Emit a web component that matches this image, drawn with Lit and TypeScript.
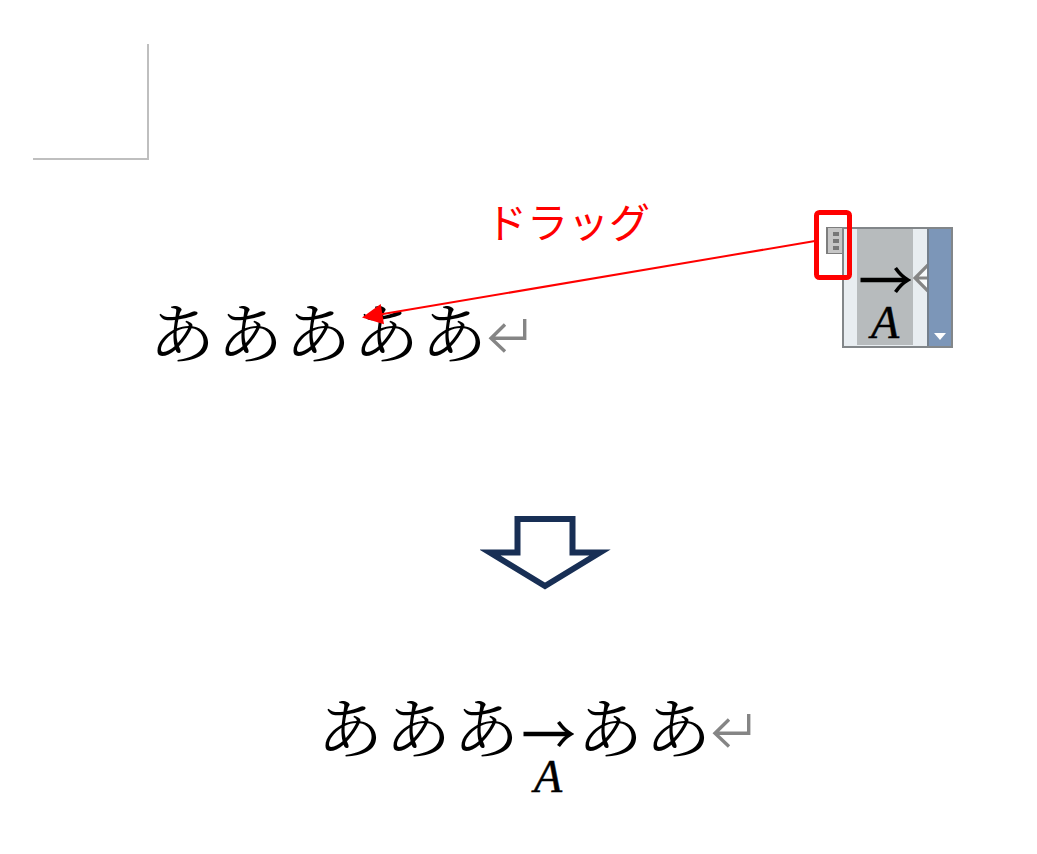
import { LitElement, html, css } from "lit";
import { customElement, property } from "lit/decorators.js";

@customElement("kana-run")
class KanaRun extends LitElement {
  @property() text = "";
  static styles = css`
    :host {
      display: flex;
      font-family: "Noto Serif CJK JP", "Noto Sans CJK JP", serif;
      font-size: 66px;
      font-weight: 400;
      line-height: 68px;
      color: #000;
    }
    .cell {
      width: 68px;
      text-align: center;
    }
  `;
  render() {
    return [...this.text].map((c) => html`<span class="cell">${c}</span>`);
  }
}

@customElement("return-mark")
class ReturnMark extends LitElement {
  static styles = css`
    :host,
    svg {
      display: block;
    }
  `;
  render() {
    return html`<svg width="40" height="36" viewBox="0 0 40 36" fill="none" stroke="#858585" stroke-width="3.4" aria-hidden="true">
      <path d="M36.7 1V20.3H3M17 6.500 3 20.300l14 13.200" />
    </svg>`;
  }
}

@customElement("arrow-equation")
class ArrowEquation extends LitElement {
  static styles = css`
    :host {
      display: flex;
      flex-direction: column;
      align-items: center;
      width: 56px;
      font-family: "Liberation Serif", serif;
      font-size: 46px;
      font-style: italic;
      line-height: 46px;
      color: #000;
      -webkit-text-stroke: 0.5px #000;
    }
    svg {
      display: block;
      margin-bottom: 6px;
    }
  `;
  render() {
    return html`<svg width="52" height="28" viewBox="0 0 52 28" fill="none" stroke="#000" aria-hidden="true">
        <path d="M1.500 14H48" stroke-width="4.600" />
        <path d="M36.500 2 Q42 10 49 14 Q42 18 36.500 26" stroke-width="3.600" />
      </svg>
      <span>A</span>`;
  }
}

@customElement("equation-control")
class EquationControl extends LitElement {
  static styles = css`
    :host {
      display: flex;
      align-items: flex-start;
      height: 121px;
    }
    button {
      padding: 0;
      margin: 0;
      border: 0;
      border-radius: 0;
      display: block;
    }
    svg {
      display: block;
    }
    .grip {
      box-sizing: border-box;
      width: 16px;
      height: 27px;
      border: 1px solid #7d7d7d;
      border-width: 1px 0 1px 2px;
      background: #c6c6c6;
    }
    .frame {
      box-sizing: border-box;
      display: flex;
      width: 111px;
      height: 121px;
      border: 2px solid #828689;
      background: #e8edf1;
    }
    .selection {
      box-sizing: border-box;
      width: 56px;
      height: 116px;
      margin-left: 13px;
      padding-top: 37px;
      background: #b7bbbd;
    }
    .options {
      width: 24px;
      background: #7c96b8;
      border-left: 2px solid #747f8c;
      box-sizing: border-box;
    }
    .options svg {
      margin: 96px auto 0;
    }
  `;
  render() {
    return html`<button class="grip" aria-label="移動">
        <svg width="14" height="25" viewBox="0 0 14 25" fill="#777" aria-hidden="true">
          <path d="M5 4h6v4H5zM5 11h6v4H5zM5 18h6v4H5z" />
        </svg>
      </button>
      <div class="frame">
        <div class="selection"><arrow-equation></arrow-equation></div>
        <svg width="14" height="117" viewBox="0 0 14 117" aria-hidden="true">
          <path d="M14 36 0 49 14 62Z" fill="#f8fafb" />
          <path d="M15 36 2 49 15 62M2 49H14" fill="none" stroke="#858585" stroke-width="3.200" />
        </svg>
        <button class="options" aria-label="数式オプション">
          <svg width="12" height="8" viewBox="0 0 12 8" fill="#fff" aria-hidden="true"><path d="M0 1h12L6 8z" /></svg>
        </button>
      </div>`;
  }
}

@customElement("app-root")
class AppRoot extends LitElement {
  static styles = css`
    :host {
      display: block;
      background: #fff;
    }
    main {
      position: relative;
      padding: 44px 0 60px;
    }
    .corner {
      box-sizing: border-box;
      width: 116px;
      height: 116px;
      margin-left: 33px;
      border: solid #bfbfbf;
      border-width: 0 2px 2px 0;
    }
    .before {
      display: flex;
      justify-content: space-between;
      align-items: flex-start;
      padding: 34px 84px 0 148px;
    }
    .drag {
      margin: 0 0 0 338px;
      font-family: "Noto Sans CJK JP", sans-serif;
      font-size: 41px;
      font-weight: 400;
      line-height: 52px;
      color: #f00;
    }
    .line {
      display: flex;
      align-items: flex-start;
    }
    .before .line {
      margin-top: 50px;
    }
    return-mark {
      margin-top: 22px;
    }
    equation-control {
      margin-top: 33px;
    }
    .down {
      display: block;
      margin: 152px auto 0 480px;
    }
    .after {
      margin: 101px 0 0 316px;
    }
    .after arrow-equation {
      margin-top: 29px;
    }
    .callout {
      position: absolute;
      left: 0;
      top: 0;
      pointer-events: none;
    }
  `;
  render() {
    return html`<main>
      <div class="corner"></div>
      <section class="before">
        <div>
          <p class="drag">ドラッグ</p>
          <div class="line">
            <kana-run text="あああああ"></kana-run>
            <return-mark></return-mark>
          </div>
        </div>
        <equation-control></equation-control>
      </section>
      <svg class="down" width="131" height="74" viewBox="0 0 131 74" fill="none" stroke="#182f55" stroke-width="6" stroke-miterlimit="10" aria-hidden="true">
        <path d="M37.500 3H92.500V36.500H120L65 70 10 36.500H37.500Z" />
      </svg>
      <section class="line after">
        <kana-run text="あああ"></kana-run>
        <arrow-equation></arrow-equation>
        <kana-run text="ああ"></kana-run>
        <return-mark></return-mark>
      </section>
      <svg class="callout" width="860" height="340" viewBox="0 0 860 340" aria-hidden="true">
        <rect x="816.500" y="212.500" width="33" height="65" rx="3" fill="none" stroke="#f00" stroke-width="5" />
        <path d="M815 241 380 314.500" stroke="#f00" stroke-width="2" />
        <path d="M362 317.500 380.700 304 384 324.300Z" fill="#f00" />
      </svg>
    </main>`;
  }
}
